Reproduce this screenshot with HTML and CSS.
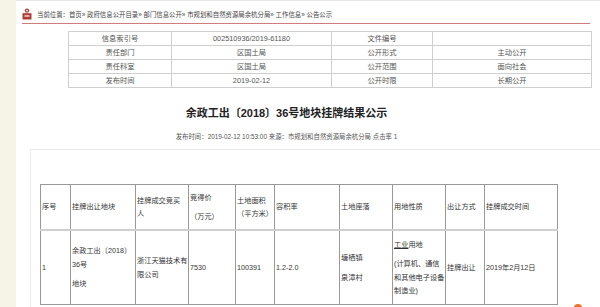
FILE: index.html
```html
<!DOCTYPE html>
<html lang="zh-CN">
<head>
    <meta charset="UTF-8">
    <meta name="viewport" content="width=device-width, initial-scale=1.0">
    <title>余政工出〔2018〕36号地块挂牌结果公示</title>
    <link rel="stylesheet" href="styles.css">
</head>
<body>
    <div class="page">
        <div class="crumb">
            <svg class="crumb-icon" width="10" height="12" viewBox="0 0 10 12">
                <circle cx="5" cy="2.6" r="2.2" fill="#b23a34"/>
                <path d="M0.5 5.2 H9.5 V11.5 H0.5 Z" fill="#b23a34"/>
                <path d="M2.5 8 H7.5" stroke="#fff" stroke-width="1.2"/>
                <circle cx="5" cy="2.6" r="0.9" fill="#fff"/>
            </svg>
            <span>当前位置：首页» 政府信息公开目录» 部门信息公开» 市规划和自然资源局余杭分局» 工作信息» 公告公示</span>
        </div>

        <table class="info">
            <colgroup>
                <col style="width: 103px">
                <col style="width: 160px">
                <col style="width: 101px">
                <col style="width: 159px">
            </colgroup>
            <tr><td>信息索引号</td><td>002510936/2019-61180</td><td>文件编号</td><td></td></tr>
            <tr><td>责任部门</td><td>区国土局</td><td>公开形式</td><td>主动公开</td></tr>
            <tr><td>责任科室</td><td>区国土局</td><td>公开范围</td><td>面向社会</td></tr>
            <tr><td>发布时间</td><td>2019-02-12</td><td>公开时限</td><td>长期公开</td></tr>
        </table>

        <div class="article">
            <h1 class="title">余政工出〔2018〕36号地块挂牌结果公示</h1>
            <div class="meta">发布时间：2019-02-12 10:53:00 来源：市规划和自然资源局余杭分局 点击率 1</div>
        </div>

        <div class="content">
            <table class="result">
                <colgroup>
                    <col style="width: 30px">
                    <col style="width: 65px">
                    <col style="width: 53px">
                    <col style="width: 47px">
                    <col style="width: 39px">
                    <col style="width: 65px">
                    <col style="width: 53px">
                    <col style="width: 53px">
                    <col style="width: 39px">
                    <col style="width: 73px">
                </colgroup>
                <tr class="head">
                    <td>序号</td>
                    <td>挂牌出让地块</td>
                    <td>挂牌成交竞买<br>人</td>
                    <td><p>竞得价</p><p>（万元）</p></td>
                    <td>土地面积（平方米）</td>
                    <td>容积率</td>
                    <td>土地座落</td>
                    <td>用地性质</td>
                    <td>出让方式</td>
                    <td>挂牌成交时间</td>
                </tr>
                <tr class="body">
                    <td>1</td>
                    <td><p>余政工出〔2018〕36号</p><p>地块</p></td>
                    <td>浙江天猫技术有限公司</td>
                    <td>7530</td>
                    <td>100391</td>
                    <td>1.2-2.0</td>
                    <td><p>塘栖镇</p><p>泉漳村</p></td>
                    <td><p><u>工业</u>用地</p><p>(计算机、通信和其他电子设备制造业)</p></td>
                    <td>挂牌出让</td>
                    <td>2019年2月12日</td>
                </tr>
            </table>
        </div>
    </div>
    <div class="float-btn"></div>
</body>
</html>
```

FILE: styles.css
```css
body {
    margin: 0;
    background-color: #f6f3e7;
    font-family: "Liberation Sans", "Noto Sans CJK SC", sans-serif;
    color: #333;
    overflow: hidden;
}
.page {
    margin-left: 16px;
    min-height: 306px;
    background-color: #fff;
    border-top: 1px solid #e6e6e6;
}
.crumb {
    display: flex;
    align-items: center;
    gap: 5px;
    height: 18px;
    padding-top: 4px;
    margin: 0 10px 0 6px;
    border-bottom: 1px solid #d27b7b;
    font-size: 6.4px;
    color: #444;
}
.crumb-icon {
    flex: none;
}
.info {
    margin: 7px 0 0 52px;
    width: 523px;
    table-layout: fixed;
    border-collapse: collapse;
    border: 1px solid #aaa;
}
.info td {
    height: 13px;
    padding: 0;
    border: 1px solid #cfcfcf;
    font-size: 7.3px;
    line-height: 13px;
    text-align: center;
    color: #555;
}
.article {
    width: 541px;
    text-align: center;
}
.title {
    margin: 18px 0 0;
    font-size: 11px;
    line-height: 14px;
    font-weight: bold;
    color: #222;
}
.meta {
    margin-top: 12px;
    font-size: 6.4px;
    line-height: 10px;
    color: #555;
}
.content {
    margin: 7px 0 0 14px;
    padding: 34px 0 10px 9px;
    border: 1px solid #ececec;
    border-right: none;
}
.result {
    width: 517px;
    table-layout: fixed;
    border-collapse: collapse;
    border: 1px solid #999;
}
.result td {
    padding: 0 0 0 1px;
    border: 1px solid #999;
    vertical-align: middle;
    font-size: 7.2px;
    line-height: 13.5px;
    color: #333;
}
.result .head td {
    height: 44px;
    border-bottom: 2px solid #cfcfcf;
}
.result .body td {
    height: 73px;
}
.result p {
    margin: 0;
}
.result p + p {
    margin-top: 6px;
}
.float-btn {
    position: fixed;
    left: 574px;
    top: 304px;
    width: 8px;
    height: 8px;
    border-radius: 50%;
    background-color: #f27026;
}
```
